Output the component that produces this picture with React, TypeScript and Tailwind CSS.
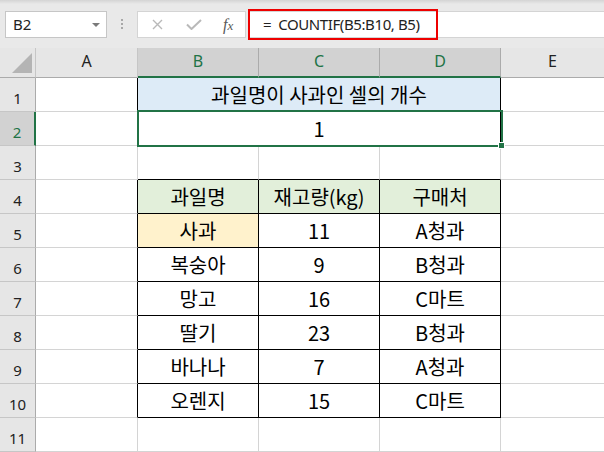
import React from "react";

const tableRows: string[][] = [
  ["사과", "11", "A청과"],
  ["복숭아", "9", "B청과"],
  ["망고", "16", "C마트"],
  ["딸기", "23", "B청과"],
  ["바나나", "7", "A청과"],
  ["오렌지", "15", "C마트"],
];

const cellFont = { fontFamily: '"Noto Sans CJK KR", "Noto Sans", sans-serif' };
const uiFont = { fontFamily: '"Noto Sans", "Liberation Sans", sans-serif' };

function Toolbar() {
  return (
    <div className="relative h-[48px] bg-[#e9e9e9] flex items-start pt-[11px]" style={uiFont}>
      <div className="absolute left-0 top-0 w-full h-[4px] bg-gradient-to-b from-[#d4d4d4] to-[#e9e9e9]" />
      <div className="ml-[5px] w-[102px] h-[27px] bg-white border border-[#c6c6c6] flex items-center justify-between pl-[7px] pr-[6px]">
        <span className="text-[15px] leading-none text-[#222]">B2</span>
        <svg width="8" height="4" viewBox="0 0 8 4">
          <polygon points="0,0 8,0 4,4" fill="#7a7a7a" />
        </svg>
      </div>
      <div className="ml-[14px] mt-[8px] flex flex-col gap-[2px]">
        <div className="w-[2px] h-[2px] bg-[#a8a8a8]" />
        <div className="w-[2px] h-[2px] bg-[#a8a8a8]" />
        <div className="w-[2px] h-[2px] bg-[#a8a8a8]" />
      </div>
      <div className="ml-[14px] w-[109px] h-[27px] bg-white border border-[#d4d4d4] flex items-center pl-[14px]">
        <svg width="11" height="11" viewBox="0 0 11 11">
          <path d="M1 1 L10 10 M10 1 L1 10" stroke="#b9b9b9" strokeWidth="1.4" fill="none" />
        </svg>
        <svg className="ml-[23px]" width="16" height="11" viewBox="0 0 16 11">
          <path d="M1 5.5 L5.5 10 L15 1" stroke="#b9b9b9" strokeWidth="2" fill="none" />
        </svg>
        <span
          className="ml-[21px] text-[16px] leading-none italic text-[#595959]"
          style={{ fontFamily: '"Liberation Serif", serif' }}
        >
          f<span className="text-[13px]">x</span>
        </span>
      </div>
      <div className="ml-[2px] flex-1 h-[27px] bg-white border-y border-l border-[#d4d4d4] flex items-center pl-[14px]">
        <span className="text-[15px] leading-none tracking-[-0.4px] text-[#222] whitespace-pre">=  COUNTIF(B5:B10, B5)</span>
      </div>
      <div className="absolute left-[248px] top-[9px] w-[190px] h-[31px] border-2 border-[#ee0000]" />
    </div>
  );
}

const dataCls =
  "flex items-center justify-center border-r border-r-black border-b border-b-black text-[20px] leading-none text-black";

function Sheet() {
  const colHeaders = ["A", "B", "C", "D", "E"];
  const rows = Array.from({ length: 11 }, (_, i) => i + 1);

  const renderRow = (r: number) => {
    const sel = r === 2;
    const out: React.ReactNode[] = [];
    out.push(
      <div
        key={`h${r}`}
        className={
          sel
            ? "flex items-end justify-center pb-[5px] bg-[#d2d2d2] border-r-2 border-r-[#217346] border-b border-b-[#c6c6c6] text-[#217346] text-[15px] leading-none"
            : "flex items-end justify-center pb-[5px] bg-[#e6e6e6] border-r border-r-[#ababab] border-b border-b-[#c6c6c6] text-[#222] text-[15px] leading-none"
        }
        style={uiFont}
      >
        {r}
      </div>
    );
    const blackA = r === 1 || r === 2 || (r >= 4 && r <= 10);
    out.push(
      <div
        key={`a${r}`}
        className={
          blackA
            ? "border-r border-r-black border-b border-b-[#d4d4d4]"
            : "border-r border-r-[#d4d4d4] border-b border-b-[#d4d4d4]"
        }
      />
    );
    if (r === 1) {
      out.push(
        <div key={`m${r}`} className={`col-span-3 bg-[#ddebf7] ${dataCls}`} style={cellFont}>
          과일명이 사과인 셀의 개수
        </div>
      );
    } else if (r === 2) {
      out.push(
        <div key={`m${r}`} className={`col-span-3 bg-white ${dataCls}`} style={cellFont}>
          1
        </div>
      );
    } else if (r === 3) {
      for (let c = 0; c < 3; c++) {
        out.push(
          <div key={`c${r}${c}`} className="border-r border-r-[#d4d4d4] border-b border-b-black" />
        );
      }
    } else if (r === 4) {
      ["과일명", "재고량(kg)", "구매처"].forEach((t, c) =>
        out.push(
          <div key={`c${r}${c}`} className={`bg-[#e2efda] ${dataCls}`} style={cellFont}>
            {t}
          </div>
        )
      );
    } else if (r >= 5 && r <= 10) {
      tableRows[r - 5].forEach((t, c) =>
        out.push(
          <div
            key={`c${r}${c}`}
            className={r === 5 && c === 0 ? `bg-[#fff2cc] ${dataCls}` : `bg-white ${dataCls}`}
            style={cellFont}
          >
            {t}
          </div>
        )
      );
    } else {
      for (let c = 0; c < 3; c++) {
        out.push(
          <div key={`c${r}${c}`} className="border-r border-r-[#d4d4d4] border-b border-b-[#d4d4d4]" />
        );
      }
    }
    out.push(<div key={`e${r}`} className="border-b border-b-[#d4d4d4]" />);
    return out;
  };

  return (
    <div className="relative">
      <div className="grid grid-cols-[36px_102px_121px_121px_121px_103px] grid-rows-[30px_repeat(11,34px)]">
        <div className="relative bg-[#e6e6e6] border-r border-r-[#c6c6c6] border-b border-b-[#ababab] flex items-end justify-end pr-[3px] pb-[4px]">
          <svg width="20" height="20" viewBox="0 0 20 20">
            <polygon points="20,0 20,20 0,20" fill="#b4b4b4" />
          </svg>
        </div>
        {colHeaders.map((h) => {
          const sel = h === "B" || h === "C" || h === "D";
          return (
            <div
              key={h}
              className={
                sel
                  ? "flex items-center justify-center pb-[3px] bg-[#d2d2d2] border-r border-r-[#ababab] border-b-2 border-b-[#217346] text-[#217346] text-[16px] leading-none"
                  : h === "E"
                  ? "flex items-center justify-center pb-[3px] bg-[#e6e6e6] border-b border-b-[#ababab] text-[#222] text-[16px] leading-none"
                  : "flex items-center justify-center pb-[3px] bg-[#e6e6e6] border-r border-r-[#c6c6c6] border-b border-b-[#ababab] text-[#222] text-[16px] leading-none"
              }
              style={uiFont}
            >
              {h}
            </div>
          );
        })}
        {rows.map((r) => renderRow(r))}
      </div>
      <div className="absolute left-[137px] top-[62px] w-[366px] h-[37px] border-2 border-[#217346] pointer-events-none" />
      <div className="absolute left-[498px] top-[94px] w-[7px] h-[7px] bg-[#217346] border border-white" />
    </div>
  );
}

export default function App() {
  return (
    <div className="w-[604px] h-[452px] overflow-hidden bg-white">
      <Toolbar />
      <Sheet />
    </div>
  );
}
